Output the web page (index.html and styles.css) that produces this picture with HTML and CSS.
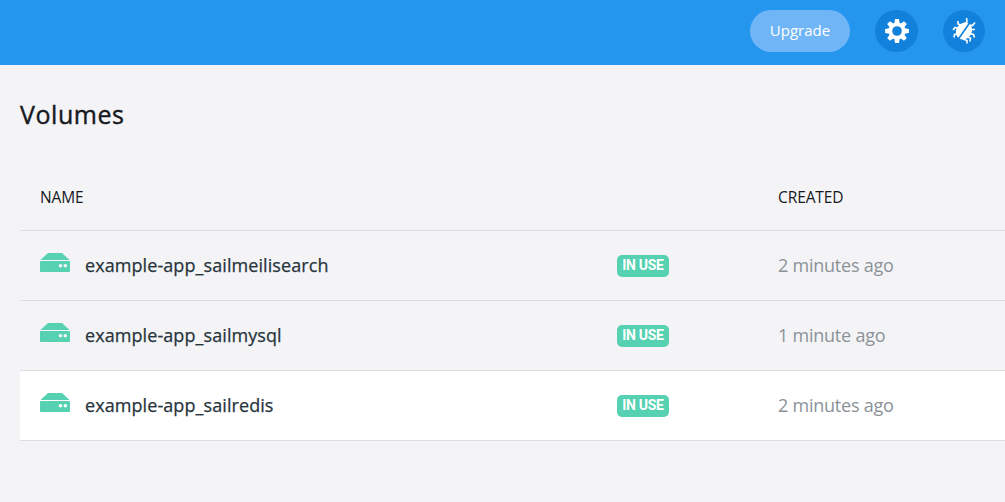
FILE: index.html
```html
<!DOCTYPE html>
<html lang="en">
<head>
<meta charset="utf-8">
<title>Volumes</title>
<link rel="stylesheet" href="styles.css">
</head>
<body>
<svg width="0" height="0" class="sprite" aria-hidden="true">
  <symbol id="drive" viewBox="0 0 30 19">
    <path d="M8 0h14l7.500 7H.5z"/>
    <path fill-rule="evenodd" d="M1 8h28q1 0 1 1v9q0 1-1 1H1q-1 0-1-1V9q0-1 1-1zM20.500 11a1.800 1.800 0 1 0 0 3.600a1.800 1.800 0 1 0 0-3.600zM25.300 11a1.800 1.800 0 1 0 0 3.600a1.800 1.800 0 1 0 0-3.600z"/>
  </symbol>
</svg>
<header class="topbar">
  <button class="upgrade">Upgrade</button>
  <button class="round settings" aria-label="Settings">
    <svg width="24" height="24" viewBox="-12 -12 24 24">
      <g fill="#fff">
        <path id="tooth" d="M-2.700-7.500L-2-11.900H2L2.700-7.500V7.500L2 11.900H-2L-2.700 7.500z"/>
        <use href="#tooth" transform="rotate(45)"/>
        <use href="#tooth" transform="rotate(90)"/>
        <use href="#tooth" transform="rotate(135)"/>
        <circle r="8.600"/>
      </g>
      <circle r="4.800" fill="#1281dc"/>
    </svg>
  </button>
  <button class="round" aria-label="Troubleshoot">
    <svg width="28" height="28" viewBox="-14 -14 28 28">
      <g transform="rotate(35)">
        <ellipse rx="7.700" ry="9" fill="#fff"/>
        <path d="M0-10V10" stroke="#1281dc" stroke-width="1.700"/>
      </g>
      <path d="M-3-6L-6-7L-6-10M-6-2.500L-9-3.500L-11-1M-6.500 3L-9.500 3.500L-10 6.500M1-7L3-9.500L2.500-13M6-6L8.500-5.500L11-8.500M7-1.500L11-1.500M6 2.500L9.500 3.500L10.500 6.500M3 6L6.500 7L6 10.500M-1 8L3 9.500L3 12.500" fill="none" stroke="#fff" stroke-width="1.600"/>
    </svg>
  </button>
</header>
<main class="page">
  <h1 class="title">Volumes</h1>
  <div class="table">
    <div class="row head"><span>NAME</span><span></span><span>CREATED</span></div>
    <div class="row">
      <span class="name"><svg class="drive"><use href="#drive"/></svg>example-app_sailmeilisearch</span>
      <span class="badge">IN USE</span><span class="created">2 minutes ago</span>
    </div>
    <div class="row">
      <span class="name"><svg class="drive"><use href="#drive"/></svg>example-app_sailmysql</span>
      <span class="badge">IN USE</span><span class="created">1 minute ago</span>
    </div>
    <div class="row active">
      <span class="name"><svg class="drive"><use href="#drive"/></svg>example-app_sailredis</span>
      <span class="badge">IN USE</span><span class="created">2 minutes ago</span>
    </div>
  </div>
</main>
</body>
</html>
```
FILE: styles.css
```css
* { box-sizing: border-box; }
body {
  margin: 0;
  height: 502px;
  overflow: hidden;
  background: #f4f4f6;
  color: #17191e;
  font-family: "Open Sans", sans-serif;
}
.sprite { position: absolute; }
.topbar {
  display: flex;
  justify-content: flex-end;
  align-items: flex-start;
  gap: 25px;
  height: 65px;
  padding: 10px 20px 0 0;
  background: #2496ed;
}
button {
  border: 0;
  padding: 0;
  color: #fff;
  font: 15px "Open Sans", sans-serif;
}
.upgrade {
  width: 100px;
  height: 42px;
  padding-bottom: 2px;
  border-radius: 21px;
  background: #70b6f7;
}
.round {
  display: flex;
  align-items: center;
  justify-content: center;
  width: 42px;
  height: 42px;
  border-radius: 50%;
  background: #1281dc;
}
.settings { width: 43px; }
.page { padding: 31px 0 0 20px; }
.title {
  margin: 0;
  font-size: 25px;
  font-weight: 400;
  line-height: 36px;
  letter-spacing: .55px;
  -webkit-text-stroke: .4px;
}
.table { margin-top: 33px; }
.row {
  display: grid;
  grid-template-columns: 577px 161px 1fr;
  align-items: center;
  height: 70px;
  padding-left: 20px;
  border-bottom: 1px solid #dddee1;
}
.head {
  height: 66px;
  padding-bottom: 2px;
  font-size: 15.5px;
  letter-spacing: -.1px;
}
.active { background: #fff; }
.name {
  display: flex;
  align-items: center;
  gap: 15px;
  padding-bottom: 2px;
  color: #27343d;
  font-size: 18px;
  letter-spacing: .08px;
  -webkit-text-stroke: .25px;
}
.drive {
  width: 30px;
  height: 19px;
  margin-bottom: 5px;
  fill: #56d1b1;
  stroke: none;
}
.badge {
  width: 52px;
  height: 22px;
  border-radius: 5px;
  background: #56d1b1;
  color: #fff;
  font: bold 14px/21px Roboto, sans-serif;
  letter-spacing: -.3px;
  text-align: center;
}
.created {
  padding-bottom: 2px;
  color: #8b9298;
  font-size: 18px;
  letter-spacing: -.23px;
}
```
